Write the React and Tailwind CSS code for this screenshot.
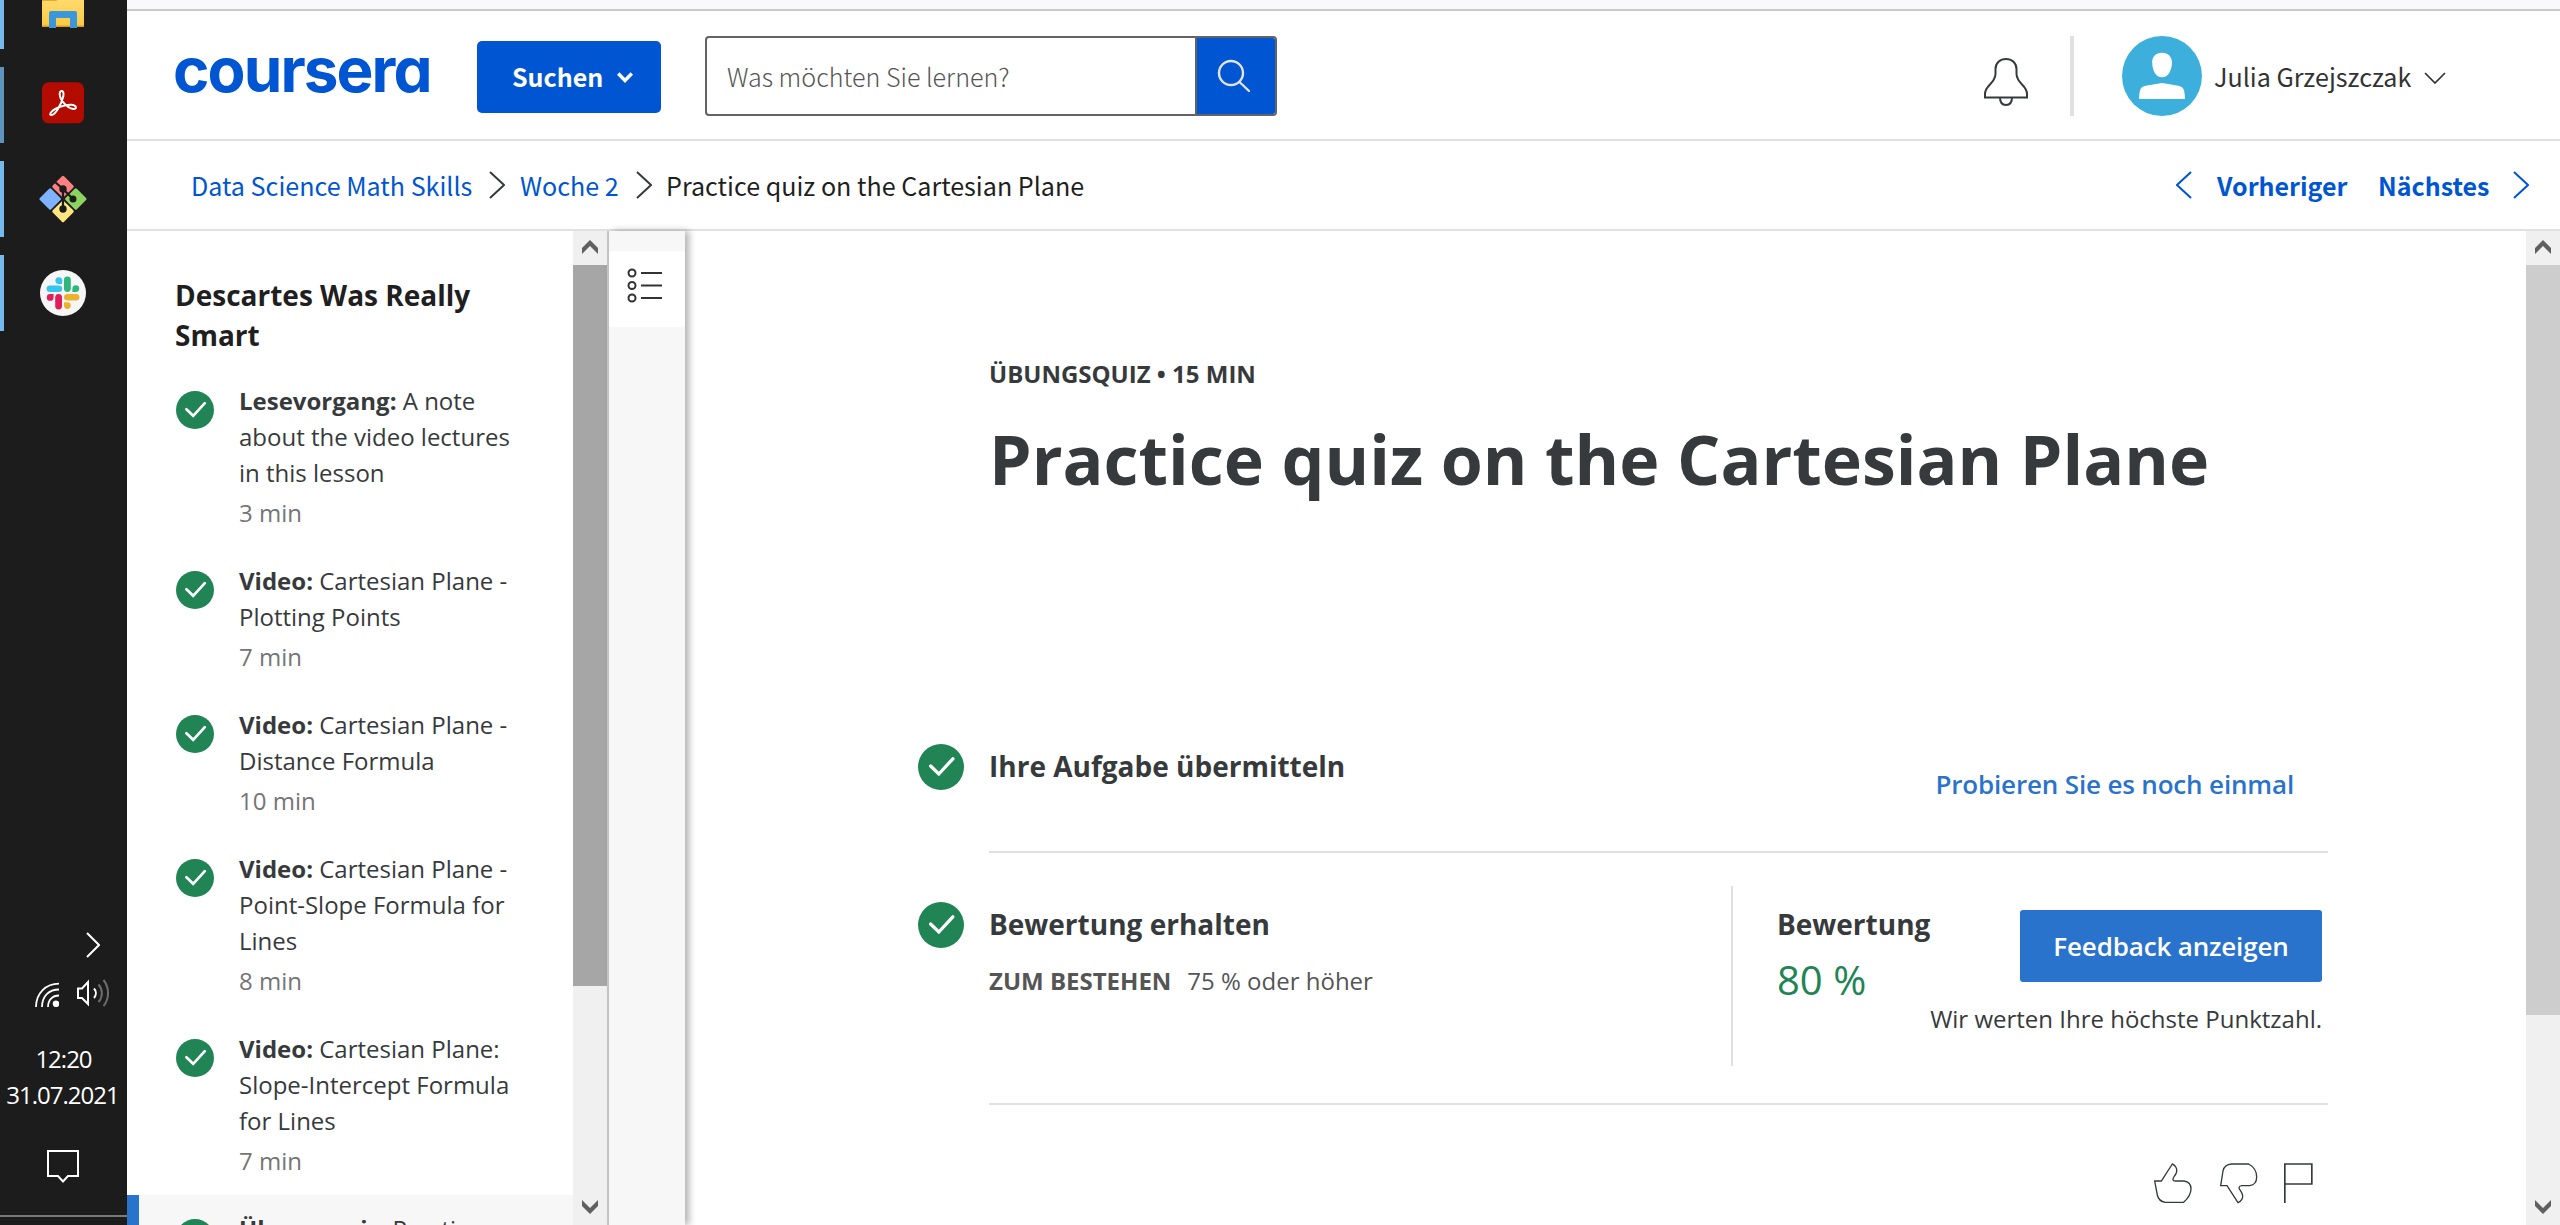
import React from "react";

const SOURCE = "font-['Noto_Sans_CJK_SC',sans-serif]";

function Chevron({ dir, className, width = 16, height = 28, stroke = 2 }) {
  const points = {
    right: `1,1 ${width - 1},${height / 2} 1,${height - 1}`,
    left: `${width - 1},1 1,${height / 2} ${width - 1},${height - 1}`,
    down: `1,1 ${width / 2},${height - 1} ${width - 1},1`,
  };
  return (
    <svg className={className} width={width} height={height} fill="none" stroke="currentColor" strokeWidth={stroke}>
      <polyline points={points[dir]} />
    </svg>
  );
}

function CheckCircle({ size, className }) {
  return (
    <svg className={className} width={size} height={size} viewBox="0 0 38 38" fill="none">
      <circle cx="19" cy="19" r="19" fill="#208454" />
      <path d="M10.4 18.2 17.2 24.8 28.8 12.2" stroke="#fff" strokeWidth="2.7" strokeLinecap="round" />
    </svg>
  );
}

function ScrollArrow({ up }) {
  return (
    <svg width="16" height="14" fill="#606060">
      <polygon points={up ? "0,8 8,0 16,8 16,14 8,6 0,14" : "0,0 8,8 16,0 16,6 8,14 0,6"} />
    </svg>
  );
}

function Scrollbar({ thumbClass }) {
  return (
    <div className="flex w-[34px] shrink-0 flex-col bg-[#f0f0f0]">
      <div className="flex h-[34px] shrink-0 items-center justify-center pb-[2px]">
        <ScrollArrow up />
      </div>
      <div className={thumbClass} />
      <div className="mt-auto flex h-[34px] shrink-0 items-center justify-center pb-[2px]">
        <ScrollArrow />
      </div>
    </div>
  );
}

/* ---------- Windows taskbar ---------- */

function ExplorerIcon() {
  return (
    <svg width="42" height="28" className="mb-[21px]">
      <defs>
        <linearGradient id="folder" x1="0" y1="0" x2="0" y2="1">
          <stop offset="0" stopColor="#ffda6c" />
          <stop offset="1" stopColor="#fbc940" />
        </linearGradient>
      </defs>
      <path d="M0 0H42V26a1 1 0 0 1-1 1H1a1 1 0 0 1-1-1Z" fill="url(#folder)" />
      <path d="M0 0H16L14 1H0Z" fill="#e5ab2c" />
      <path d="M0 25.5H42V26a1 1 0 0 1-1 1H1a1 1 0 0 1-1-1Z" fill="#d9a014" />
      <path d="M7 28V13a2 2 0 0 1 2-2H33a2 2 0 0 1 2 2V28H28V18H14V28Z" fill="#3a97dd" />
    </svg>
  );
}

function AcrobatIcon() {
  return (
    <svg width="42" height="42" viewBox="126 246 126 124">
      <rect x="126" y="246" width="126" height="123" rx="20" fill="#b30b00" />
      <path
        d="M153 344C164 347 184 314 190 288C193 268 180 268 179 280C179 298 200 322 220 326C232 327 230 314 214 313C194 312 164 324 155 334C149 341 150 344 153 344Z"
        fill="none"
        stroke="#fff"
        strokeWidth="6"
        strokeLinejoin="round"
      />
    </svg>
  );
}

function GitIcon() {
  return (
    <svg width="48" height="48" viewBox="0 0 48 48">
      <rect x="-8" y="-8" width="16" height="16" rx="1.5" fill="#ff8080" transform="translate(24 11.6) rotate(45)" />
      <rect x="-8" y="-8" width="16" height="16" rx="1.5" fill="#80b3ff" transform="translate(11.2 24) rotate(45)" />
      <rect x="-8" y="-8" width="16" height="16" rx="1.5" fill="#8dd35f" transform="translate(36.8 24) rotate(45)" />
      <rect x="-8" y="-8" width="16" height="16" rx="1.5" fill="#ffe680" transform="translate(24 36.4) rotate(45)" />
      <g stroke="#1c1c1c" strokeWidth="2.2" fill="#1c1c1c">
        <path d="M15.5 6.5 24 14 34 24M24 14V34" />
        <circle cx="24" cy="14" r="2.6" />
        <circle cx="34" cy="24" r="2.4" />
        <circle cx="24" cy="34" r="2.6" />
      </g>
    </svg>
  );
}

function SlackIcon() {
  return (
    <svg width="46" height="46" viewBox="40 270 46 46">
      <circle cx="63" cy="293" r="23" fill="#f6f6f6" />
      <g fill="#36c5f0">
        <rect x="46.6" y="285.4" width="15.6" height="6.6" rx="3.3" />
        <path d="M62.2 284V280.2a3.4 3.4 0 1 0-3.4 3.8Z" />
      </g>
      <g fill="#2eb67d">
        <rect x="64" y="276.6" width="6.8" height="15.4" rx="3.4" />
        <path d="M72.4 292V288.6a3.4 3.4 0 1 1 3.4 3.4Z" />
      </g>
      <g fill="#e01e5a">
        <rect x="55.2" y="294" width="6.8" height="15.4" rx="3.4" />
        <path d="M53.6 294V297.4a3.4 3.4 0 1 1-3.4-3.4Z" />
      </g>
      <g fill="#ecb22e">
        <rect x="64" y="294" width="15.4" height="6.6" rx="3.3" />
        <path d="M64 302.2H67.4a3.4 3.4 0 1 1-3.4 3.4Z" />
      </g>
    </svg>
  );
}

function TaskTile({ className, children }) {
  return <div className={`flex items-center justify-center border-l-4 pr-[5px] ${className}`}>{children}</div>;
}

function Taskbar() {
  return (
    <aside className="flex w-[127px] shrink-0 flex-col bg-[#1c1c1c] text-white">
      <div className="flex flex-col gap-[18px]">
        <TaskTile className="h-[49px] border-[#76b9ed]"><ExplorerIcon /></TaskTile>
        <TaskTile className="h-[76px] border-[#5f94be] pb-[5px]"><AcrobatIcon /></TaskTile>
        <TaskTile className="h-[76px] border-[#76b9ed]"><GitIcon /></TaskTile>
        <TaskTile className="h-[76px] border-[#76b9ed]"><SlackIcon /></TaskTile>
      </div>

      <div className="mt-auto flex h-[294px] flex-col">
        <Chevron dir="right" width={14} height={26} className="mt-px ml-[86px]" />
        <div className="mt-[20px] ml-[35px] flex items-end gap-[18px]">
          <svg className="mb-px" width="24" height="28" fill="none" stroke="#fff" strokeWidth="1.8">
            <path d="M1 28C1 14 11 4.600 24 4.600M7 28C7 17 14 10.500 24 10.500M13 28C13 21 17.500 16.500 24 16.500" />
            <circle cx="21" cy="24.800" r="2.400" fill="#fff" />
          </svg>
          <svg width="33" height="30" fill="none" strokeWidth="2">
            <path d="M1 10.500H5L11 4V26L5 20H1Z" stroke="#fff" />
            <path d="M17 10.500C19.500 13 19.500 17 17 20" stroke="#fff" />
            <path d="M21.500 6.500C26 11.500 26 19 21.500 24M26.500 2C32.500 9 32.500 21 26.500 28" stroke="#6c6c6c" />
          </svg>
        </div>
        <div className="mt-[33px] text-center font-['Open_Sans',sans-serif] text-[24px] leading-[36px] tracking-[-1px]">
          <div>12:20</div>
          <div className="-ml-[2px]">31.07.2021</div>
        </div>
        <svg className="mt-[37px] ml-[47px]" width="32" height="33" fill="none" stroke="#fff" strokeWidth="2">
          <path d="M1 1H31V26H21L16 31.500 11 26H1Z" />
        </svg>
        <div className="mt-auto mb-2 h-[2px] bg-[#7a7878]" />
      </div>
    </aside>
  );
}

/* ---------- Header ---------- */

function Header() {
  return (
    <header className="flex h-[130px] shrink-0 items-start border-b-2 border-[#e1e1e1] bg-white pl-[46px]">
      <a className="mt-[19px] w-[304px] font-['Inter',sans-serif] text-[62px] leading-[80px] font-bold tracking-[-1.9px] text-[#0056d2] [font-feature-settings:'cv11']">
        coursera
      </a>
      <button className={`mt-[30px] flex h-[72px] w-[184px] items-center rounded-[5px] bg-[#0056d2] pl-[35px] text-[25px] font-bold text-white ${SOURCE}`}>
        <span className="w-[105px] pb-[2px] text-left leading-[36px]">Suchen</span>
        <svg width="16" height="11" fill="none" stroke="#fff" strokeWidth="3.4">
          <path d="M1.200 1.500 8 8.500 14.800 1.500" />
        </svg>
      </button>
      <div className="mt-[25px] ml-[44px] flex h-[80px] w-[572px] overflow-hidden rounded-[4px] border-2 border-[#636363]">
        <div className={`flex flex-1 items-center pl-[20px] text-[25.1px] leading-[36px] font-light text-[#555] ${SOURCE}`}>
          Was möchten Sie lernen?
        </div>
        <button className="flex w-[80px] items-center justify-center border-l-2 border-[#636363] bg-[#0056d2]">
          <svg className="mr-[4px]" width="34" height="34" fill="none" stroke="#e3e3e3" strokeWidth="2.4">
            <circle cx="14" cy="14" r="12" />
            <path d="M22.500 23 32 32" strokeLinecap="round" />
          </svg>
        </button>
      </div>

      <svg className="mt-[45px] ml-[706px]" width="46" height="52" fill="none" stroke="#373a3c" strokeWidth="2">
        <path d="M2 41.500H44V38C44 29 34 28 33.500 18V13C33.500 7 29 3 23 3S12.500 7 12.500 13V18C12 28 2 29 2 38Z" />
        <path d="M17 41.500C17 46.500 19.500 49 23 49S29 46.500 29 41.500" />
      </svg>
      <div className="mt-[25px] ml-[41px] h-[80px] w-1 bg-[#e1e1e1]" />
      <div className="mt-[25px] ml-[48px] flex h-[80px] items-center">
        <svg width="80" height="80" fill="#fff">
          <circle cx="40" cy="40" r="40" fill="#3dafdc" />
          <path d="M40 16.700C46 16.700 50.200 20.500 50 27C49.500 35 46 41.300 40 41.300S30.500 35 30.200 27C29.800 20.500 34 16.700 40 16.700Z" />
          <path d="M17 63C17.500 53 18 51 25 49.500L40 47L55 49.500C62 51 62.500 53 63 63Z" />
        </svg>
        <span className={`ml-[12px] w-[210px] text-[25.1px] leading-[36px] whitespace-nowrap text-[#333] ${SOURCE}`}>Julia Grzejszczak</span>
        <Chevron dir="down" width={22} height={12} stroke={1.7} className="mt-1 text-[#333]" />
      </div>
    </header>
  );
}

function Breadcrumbs() {
  return (
    <nav className={`flex h-[90px] shrink-0 items-center border-b-2 border-[#e1e1e1] bg-white pr-[31px] pl-[64px] text-[25.1px] leading-[36px] text-[#0056d2] ${SOURCE}`}>
      <span className="w-[298px]">Data Science Math Skills</span>
      <Chevron dir="right" className="text-[#373a3c]" />
      <span className="ml-[15px] w-[116px]">Woche 2</span>
      <Chevron dir="right" className="text-[#373a3c]" />
      <span className="ml-[14px] text-[#1f1f1f]">Practice quiz on the Cartesian Plane</span>
      <div className="ml-auto flex items-center text-[25px] font-bold">
        <Chevron dir="left" />
        <span className="ml-[25px] w-[161px]">Vorheriger</span>
        <span className="w-[135px]">Nächstes</span>
        <Chevron dir="right" />
      </div>
    </nav>
  );
}

/* ---------- Lesson list ---------- */

const LESSONS = [
  { kind: "Lesevorgang:", lines: ["A note", "about the video lectures", "in this lesson"], time: "3 min" },
  { kind: "Video:", lines: ["Cartesian Plane -", "Plotting Points"], time: "7 min" },
  { kind: "Video:", lines: ["Cartesian Plane -", "Distance Formula"], time: "10 min" },
  { kind: "Video:", lines: ["Cartesian Plane -", "Point-Slope Formula for", "Lines"], time: "8 min" },
  { kind: "Video:", lines: ["Cartesian Plane:", "Slope-Intercept Formula", "for Lines"], time: "7 min" },
  { kind: "Übungsquiz:", lines: ["Practice"], time: "", selected: true },
];

function Lesson({ kind, lines, time, selected }) {
  return (
    <li className={selected ? "flex h-[120px] border-l-[12px] border-[#2a73cc] bg-[#f7f7f7] py-4 pl-[37px]" : "flex py-4 pl-[49px]"}>
      <CheckCircle size={38} className="mt-2 shrink-0" />
      <div className="ml-[25px] text-[24px] leading-[36px] whitespace-nowrap text-[#373a3c]">
        <div>
          <b>{kind}</b> {lines[0]}
        </div>
        {lines.slice(1).map((line) => (
          <div key={line}>{line}</div>
        ))}
        <div className="mt-1 text-[#757575]">{time}</div>
      </div>
    </li>
  );
}

function LessonPanel() {
  return (
    <div className="flex w-[482px] shrink-0 border-r-2 border-[#c8c8c8] bg-white">
      <div className="flex-1 overflow-hidden pt-[44px]">
        <h2 className="pl-[48px] text-[28px] leading-[40px] font-bold text-[#1f1f1f]">
          Descartes Was Really
          <br />
          Smart
        </h2>
        <ul className="mt-[12px]">
          {LESSONS.map((lesson, i) => (
            <Lesson key={i} {...lesson} />
          ))}
        </ul>
      </div>
      <Scrollbar thumbClass="h-[721px] shrink-0 bg-[#a6a6a6]" />
    </div>
  );
}

function Rail() {
  return (
    <div className="z-10 w-[76px] shrink-0 bg-[#f7f7f7] pt-5 shadow-[4px_0_7px_rgba(0,0,0,0.3)]">
      <div className="flex h-[76px] items-center justify-center rounded-[3px] bg-white">
        <svg className="mb-[6px] -ml-[5px]" width="36" height="36" fill="none" stroke="#333" strokeWidth="2">
          {[5, 17.5, 30].map((y) => (
            <g key={y}>
              <circle cx="5" cy={y} r="3.500" />
              <path d={`M14 ${y}H35`} />
            </g>
          ))}
        </svg>
      </div>
    </div>
  );
}

/* ---------- Quiz ---------- */

function Quiz() {
  return (
    <main className="min-w-0 flex-1 overflow-hidden bg-white pt-[125px] pl-[233px] text-[#373a3c]">
      <div className="w-[1410px]">
        <div className="pl-[71px]">
          <div className="text-[24px] leading-[36px] font-bold">ÜBUNGSQUIZ • 15 MIN</div>
          <h1 className="mt-[21px] text-[68px] leading-[92px] font-bold tracking-[-0.02px] whitespace-nowrap">Practice quiz on the Cartesian Plane</h1>
        </div>

        <section className="mt-[239px] flex h-[109px]">
          <CheckCircle size={46} className="mr-[25px] shrink-0" />
          <div className="flex flex-1 justify-between border-b-2 border-[#e1e1e1] pr-[34px]">
            <h3 className="text-[28px] leading-[44px] font-bold">Ihre Aufgabe übermitteln</h3>
            <a className="mt-[22px] text-[26px] leading-[36px] font-semibold tracking-[-0.16px] text-[#2a73cc]">Probieren Sie es noch einmal</a>
          </div>
        </section>

        <section className="flex h-[252px]">
          <CheckCircle size={46} className="mt-[49px] mr-[25px] shrink-0" />
          <div className="flex flex-1 border-b-2 border-[#e1e1e1]">
            <div className="w-[742px] pt-[49px]">
              <h3 className="text-[28px] leading-[44px] font-bold">Bewertung erhalten</h3>
              <div className="mt-[17px] flex gap-[16px] text-[24px] leading-[36px] text-[#555]">
                <b>ZUM BESTEHEN</b>
                <span>75 % oder höher</span>
              </div>
            </div>
            <div className="mt-[33px] flex h-[180px] flex-1 border-l-2 border-[#e1e1e1] pr-[6px] pl-[44px]">
              <div className="w-[151px] shrink-0 pt-[16px]">
                <div className="text-[28px] leading-[44px] font-bold">Bewertung</div>
                <div className="mt-[6px] text-[40px] leading-[56px] text-[#208454]">80 %</div>
              </div>
              <div className="flex flex-1 flex-col items-end pt-6">
                <button className="h-[72px] w-[302px] rounded-[3px] bg-[#2a73cc] text-[26px] font-semibold tracking-[-0.16px] text-white">
                  Feedback anzeigen
                </button>
                <div className="mt-[19px] text-[24px] leading-[36px] whitespace-nowrap">Wir werten Ihre höchste Punktzahl.</div>
              </div>
            </div>
          </div>
        </section>

        <div className="mt-[58px] flex justify-end pr-[15px]">
          <svg className="mr-7" width="38" height="41" viewBox="40 74 114 123" fill="none" stroke="#373a3c" strokeWidth="4">
            <path d="M42 128H62L95 77C104 80 112 92 106 106C102 114 96 118 97 124C98 127 100 128 104 128H130C145 130 151 140 151 152C151 168 142 180 129 192H74C60 190 52 180 50 170Z" />
          </svg>
          <svg className="mr-[26px]" width="38" height="41" viewBox="239 74 114 123" fill="none" stroke="#373a3c" strokeWidth="4">
            <path d="M241 142H260L293 193C304 188 308 178 307 172C306 160 296 155 296 148C297 144 299 142 304 142H328C343 140 349 128 349 116C349 98 338 84 325 77H274C258 78 250 88 248 98Z" />
          </svg>
          <svg width="29" height="41" viewBox="432 74 87 123" fill="none" stroke="#373a3c" strokeWidth="5">
            <path d="M434.500 194V77H515.500V137H434.500" />
          </svg>
        </div>
      </div>
    </main>
  );
}

export default function App() {
  return (
    <div className="flex h-[1225px] w-[2560px] overflow-hidden font-['Open_Sans',sans-serif]">
      <Taskbar />
      <div className="flex min-w-0 flex-1 flex-col">
        <div className="h-[11px] shrink-0 border-b-2 border-[#c9c9cc] bg-[#f9f9fc]" />
        <Header />
        <Breadcrumbs />
        <div className="flex min-h-0 flex-1">
          <LessonPanel />
          <Rail />
          <Quiz />
          <Scrollbar thumbClass="h-[750px] shrink-0 bg-[#cdcdcd]" />
        </div>
      </div>
    </div>
  );
}
